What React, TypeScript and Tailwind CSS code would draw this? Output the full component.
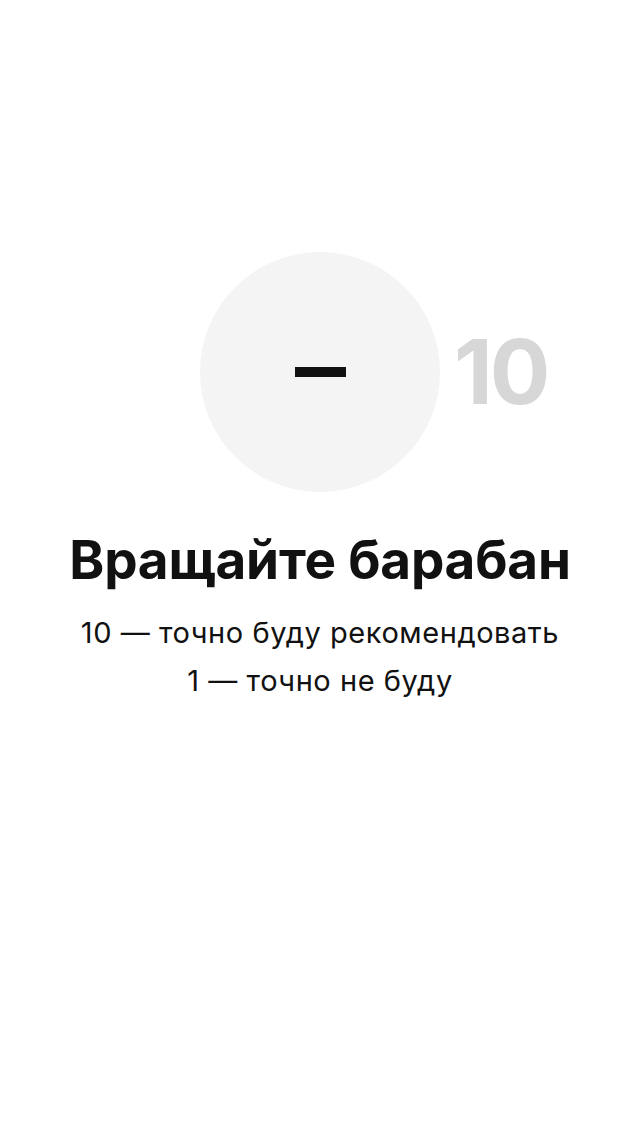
export default function App() {
    return (
        <div className="min-h-[1136px] w-[640px] bg-white flex flex-col items-center" style={{ fontFamily: 'Inter, "Noto Sans", sans-serif' }}>
            {/* Wheel */}
            <div className="mt-[252px] w-full grid grid-cols-[1fr_240px_1fr] items-center">
                <div />
                <div className="w-[240px] h-[240px] rounded-full bg-[#f4f4f4] flex items-center justify-center">
                    <div className="w-[51px] h-[10px] bg-[#111111]" />
                </div>
                <div className="pl-[14px] text-[90px] font-bold leading-none tracking-[-3px] text-[#d7d7d7]">10</div>
            </div>

            <h1 className="mt-[36px] text-[53px] font-bold leading-[64px] tracking-[-0.2px] text-[#111111]">Вращайте барабан</h1>

            <div className="mt-[17px] text-center text-[29px] leading-[48px] tracking-[0.55px] text-[#111111]">
                <p>10 — точно буду рекомендовать</p>
                <p>1 — точно не буду</p>
            </div>
        </div>
    );
}
